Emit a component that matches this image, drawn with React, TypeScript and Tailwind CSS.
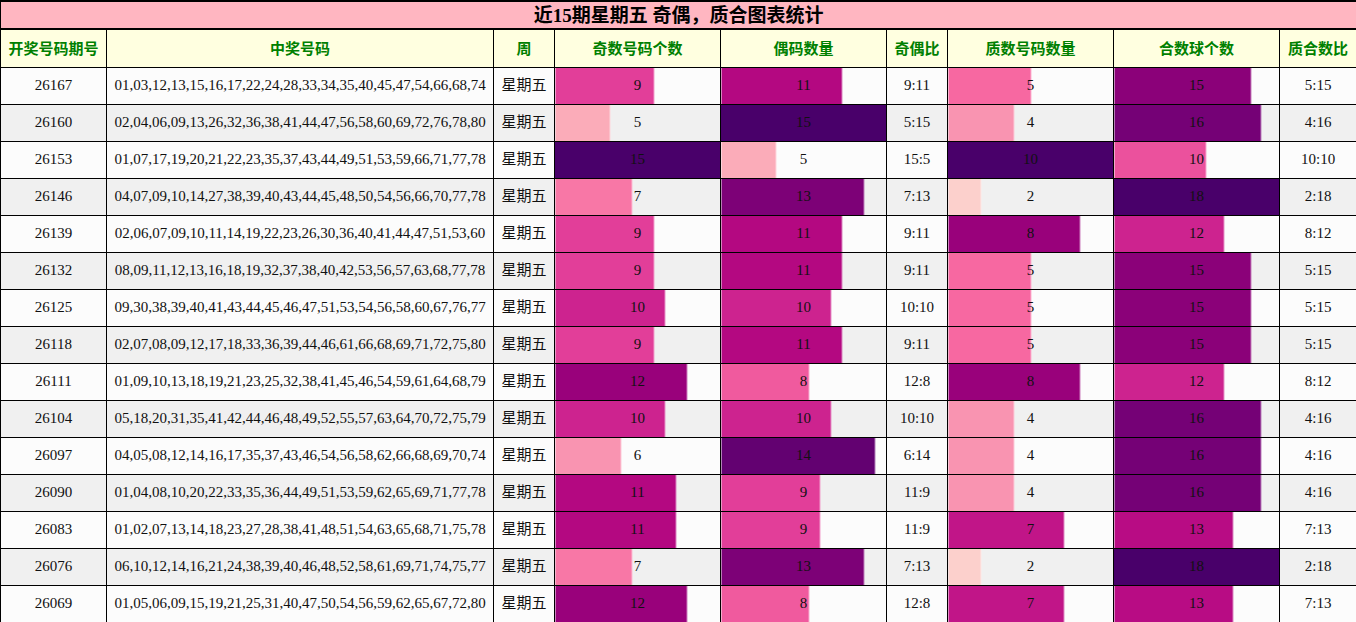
import React from 'react';

type Row = {
  issue: string;
  nums: string;
  odd: number;
  even: number;
  prime: number;
  comp: number;
};

const rows: Row[] = [
  { issue: '26167', nums: '01,03,12,13,15,16,17,22,24,28,33,34,35,40,45,47,54,66,68,74', odd: 9, even: 11, prime: 5, comp: 15 },
  { issue: '26160', nums: '02,04,06,09,13,26,32,36,38,41,44,47,56,58,60,69,72,76,78,80', odd: 5, even: 15, prime: 4, comp: 16 },
  { issue: '26153', nums: '01,07,17,19,20,21,22,23,35,37,43,44,49,51,53,59,66,71,77,78', odd: 15, even: 5, prime: 10, comp: 10 },
  { issue: '26146', nums: '04,07,09,10,14,27,38,39,40,43,44,45,48,50,54,56,66,70,77,78', odd: 7, even: 13, prime: 2, comp: 18 },
  { issue: '26139', nums: '02,06,07,09,10,11,14,19,22,23,26,30,36,40,41,44,47,51,53,60', odd: 9, even: 11, prime: 8, comp: 12 },
  { issue: '26132', nums: '08,09,11,12,13,16,18,19,32,37,38,40,42,53,56,57,63,68,77,78', odd: 9, even: 11, prime: 5, comp: 15 },
  { issue: '26125', nums: '09,30,38,39,40,41,43,44,45,46,47,51,53,54,56,58,60,67,76,77', odd: 10, even: 10, prime: 5, comp: 15 },
  { issue: '26118', nums: '02,07,08,09,12,17,18,33,36,39,44,46,61,66,68,69,71,72,75,80', odd: 9, even: 11, prime: 5, comp: 15 },
  { issue: '26111', nums: '01,09,10,13,18,19,21,23,25,32,38,41,45,46,54,59,61,64,68,79', odd: 12, even: 8, prime: 8, comp: 12 },
  { issue: '26104', nums: '05,18,20,31,35,41,42,44,46,48,49,52,55,57,63,64,70,72,75,79', odd: 10, even: 10, prime: 4, comp: 16 },
  { issue: '26097', nums: '04,05,08,12,14,16,17,35,37,43,46,54,56,58,62,66,68,69,70,74', odd: 6, even: 14, prime: 4, comp: 16 },
  { issue: '26090', nums: '01,04,08,10,20,22,33,35,36,44,49,51,53,59,62,65,69,71,77,78', odd: 11, even: 9, prime: 4, comp: 16 },
  { issue: '26083', nums: '01,02,07,13,14,18,23,27,28,38,41,48,51,54,63,65,68,71,75,78', odd: 11, even: 9, prime: 7, comp: 13 },
  { issue: '26076', nums: '06,10,12,14,16,21,24,38,39,40,46,48,52,58,61,69,71,74,75,77', odd: 7, even: 13, prime: 2, comp: 18 },
  { issue: '26069', nums: '01,05,06,09,15,19,21,25,31,40,47,50,54,56,59,62,65,67,72,80', odd: 12, even: 8, prime: 7, comp: 13 },
];

// RdPu ramp
const ramp = ['#fff7f3', '#fde0dd', '#fcc5c0', '#fa9fb5', '#f768a1', '#dd3497', '#ae017e', '#7a0177', '#49006a'];

function hex(c: string) {
  return [1, 3, 5].map((i) => parseInt(c.slice(i, i + 2), 16));
}

function rdpu(t: number) {
  const p = Math.max(0, Math.min(1, t)) * (ramp.length - 1);
  const i = Math.min(Math.floor(p), ramp.length - 2);
  const f = p - i;
  const a = hex(ramp[i]);
  const b = hex(ramp[i + 1]);
  return a.map((v, k) => Math.round(v + (b[k] - v) * f));
}

function BarCell({ value, max }: { value: number; max: number }) {
  const t = value / max;
  const pct = (t * 100).toFixed(2);
  const m = rdpu(t);
  const color = `rgb(${m[0]},${m[1]},${m[2]})`;
  const edge = `rgb(${m.map((v) => Math.round((v + 255) / 2)).join(',')})`;
  const bg =
    t >= 1
      ? color
      : `linear-gradient(to right, ${color} 0%, ${color} calc(${pct}% - 1px), ${edge} calc(${pct}% - 1px), ${edge} ${pct}%, transparent ${pct}%)`;
  return (
    <td className="border border-black p-0 text-center text-[15px] text-[#111]" style={{ background: bg }}>
      {value}
    </td>
  );
}

const headers = ['开奖号码期号', '中奖号码', '周', '奇数号码个数', '偶码数量', '奇偶比', '质数号码数量', '合数球个数', '质合数比'];

export default function App() {
  return (
    <div className="w-[1356px] font-['Liberation_Serif','Noto_Sans_CJK_SC',serif]">
      <table className="w-[1356px] table-fixed border-collapse">
        <colgroup>
          <col className="w-[106px]" />
          <col className="w-[387px]" />
          <col className="w-[61px]" />
          <col className="w-[166px]" />
          <col className="w-[166px]" />
          <col className="w-[61px]" />
          <col className="w-[166px]" />
          <col className="w-[166px]" />
          <col className="w-[77px]" />
        </colgroup>
        <thead>
          <tr className="h-[28px]">
            <th colSpan={9} className="border border-black border-t-2 border-b-2 bg-[#ffb6c1] p-0 text-center text-[19px] font-bold leading-none text-black">
              近15期星期五 奇偶，质合图表统计
            </th>
          </tr>
          <tr className="h-[38px]">
            {headers.map((h) => (
              <th key={h} className="border border-black bg-[#ffffe0] p-0 text-center text-[15px] font-bold text-[#008000] font-['Noto_Sans_CJK_SC',sans-serif]">
                {h}
              </th>
            ))}
          </tr>
        </thead>
        <tbody>
          {rows.map((r, i) => (
            <tr key={r.issue} className={i % 2 === 0 ? 'h-[37px] bg-[#fcfcfc]' : 'h-[37px] bg-[#f0f0f0]'}>
              <td className="border border-black p-0 text-center text-[15px] text-[#111]">{r.issue}</td>
              <td className="border border-black p-0 text-center text-[15px] text-[#111]">{r.nums}</td>
              <td className="border border-black p-0 text-center text-[15px] text-[#111]">星期五</td>
              <BarCell value={r.odd} max={15} />
              <BarCell value={r.even} max={15} />
              <td className="border border-black p-0 text-center text-[15px] text-[#111]">{r.odd}:{r.even}</td>
              <BarCell value={r.prime} max={10} />
              <BarCell value={r.comp} max={18} />
              <td className="border border-black p-0 text-center text-[15px] text-[#111]">{r.prime}:{r.comp}</td>
            </tr>
          ))}
        </tbody>
      </table>
    </div>
  );
}
